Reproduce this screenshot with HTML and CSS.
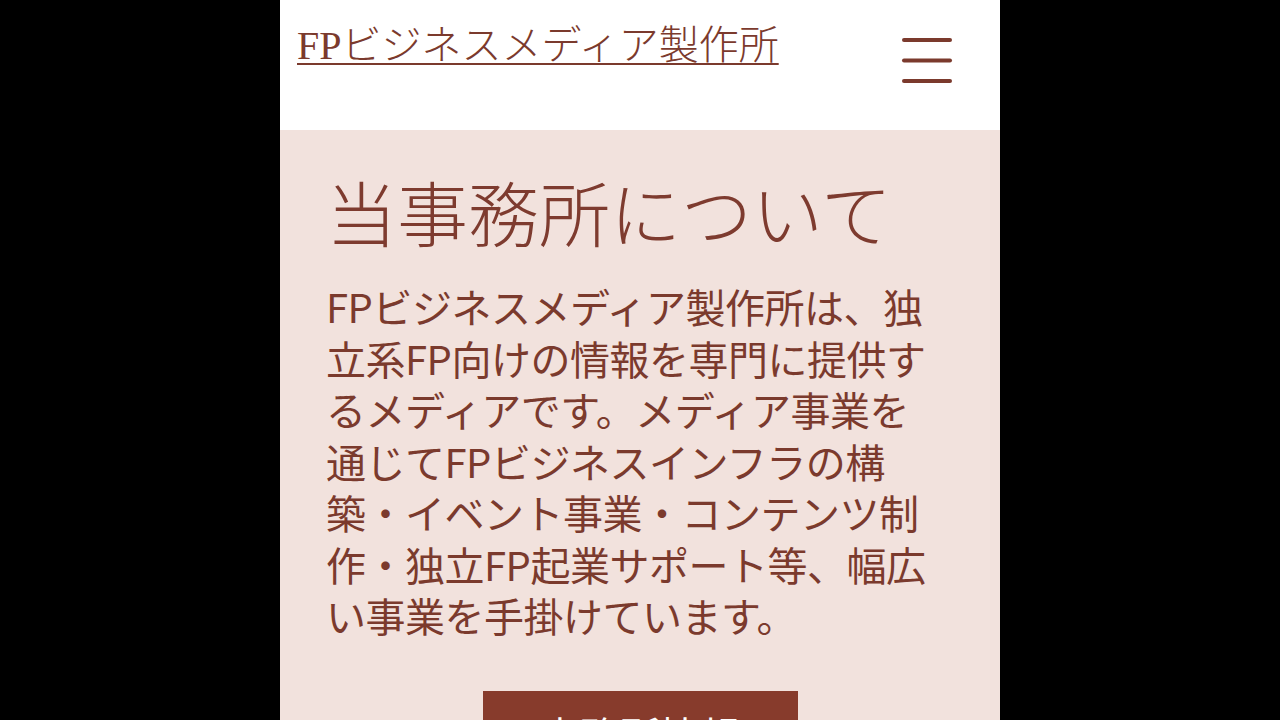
FILE: index.html
```html
<!DOCTYPE html>
<html lang="ja">
  <head>
    <meta charset="UTF-8" />
    <meta name="viewport" content="width=device-width, initial-scale=1.0" />
    <title>FPビジネスメディア製作所</title>
    <link rel="stylesheet" href="styles.css">
  </head>
  <body>
    <div class="page">
      <header class="site-header">
        <a class="site-title" href="#">FPビジネスメディア製作所</a>
        <button class="menu-btn" aria-label="メニュー">
          <svg width="50" height="50" viewBox="0 0 50 50">
            <line x1="2" y1="10" x2="48" y2="10" />
            <line x1="2" y1="30.5" x2="48" y2="30.5" />
            <line x1="2" y1="51" x2="48" y2="51" />
          </svg>
        </button>
      </header>

      <section class="about">
        <h2 class="about-title">当事務所について</h2>
        <p class="about-text">
          FPビジネスメディア製作所は、独<br>立系FP向けの情報を専門に提供す<br>るメディアです。メディア事業を<br>通じてFPビジネスインフラの構<br>築・イベント事業・コンテンツ制<br>作・独立FP起業サポート等、幅広<br>い事業を手掛けています。
        </p>
        <div class="about-action">
          <a class="btn" href="#">事務所情報</a>
        </div>
      </section>
    </div>
  </body>
</html>
```

FILE: styles.css
```css
body {
  margin: 0;
  background: #000;
  font-family: "Noto Sans CJK JP", "Noto Sans", sans-serif;
  color: #7b3a2d;
}
.page {
  width: 720px;
  min-height: 720px;
  margin: 0 auto;
  background: #f2e2dd;
  overflow: hidden;
}
.site-header {
  height: 130px;
  background: #fff;
  display: flex;
  justify-content: space-between;
  align-items: flex-start;
  padding: 17px 48px 0 17px;
  box-sizing: border-box;
}
.site-title {
  font-family: "Liberation Serif", "Noto Sans CJK JP", serif;
  font-weight: 300;
  font-size: 40px;
  line-height: 58px;
  color: #7b3a2d;
  text-decoration: underline;
  text-decoration-thickness: 2px;
  text-underline-offset: 4px;
}
.menu-btn {
  border: none;
  background: none;
  padding: 0;
  margin-top: 9px;
  cursor: pointer;
  height: 60px;
}
.menu-btn svg {
  overflow: visible;
}
.menu-btn line {
  stroke: #7b3a2d;
  stroke-width: 4;
  stroke-linecap: round;
}
.about {
  padding: 45px 46px 0 46px;
}
.about-title {
  font-family: "Liberation Serif", "Noto Sans CJK JP", serif;
  font-weight: 300;
  font-size: 71px;
  line-height: 84px;
  margin: 0 0 22px 0;
  color: #7e3b2f;
}
.about-text {
  font-size: 40px;
  line-height: 51.5px;
  margin: 0;
  letter-spacing: -0.5px;
  white-space: nowrap;
}
.about-action {
  display: flex;
  justify-content: center;
  margin-top: 49px;
}
.btn {
  display: block;
  width: 315px;
  box-sizing: border-box;
  background: #873b2c;
  color: #fff;
  text-decoration: none;
  text-align: center;
  font-size: 40px;
  line-height: 58px;
  padding: 14px 0;
}
```
